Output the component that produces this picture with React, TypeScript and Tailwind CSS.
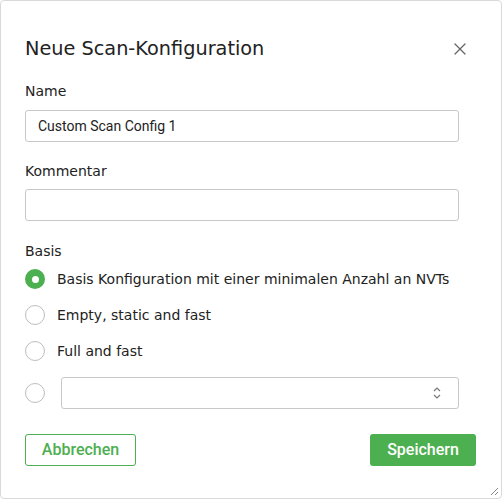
import { X } from 'lucide-react';

const dejavu = "font-['DejaVu_Sans',sans-serif]";
const roboto = "font-['Roboto',sans-serif]";

function Radio({ checked }: { checked?: boolean }) {
  return checked ? (
    <span className="flex h-5 w-5 shrink-0 items-center justify-center rounded-full bg-[#4caf50]">
      <span className="h-[7px] w-[7px] rounded-full bg-white" />
    </span>
  ) : (
    <span className="h-5 w-5 shrink-0 rounded-full border border-[#bdbdbd] bg-white" />
  );
}

export default function App() {
  const options = [
    { label: 'Basis Konfiguration mit einer minimalen Anzahl an NVTs', checked: true },
    { label: 'Empty, static and fast' },
    { label: 'Full and fast' },
  ];

  return (
    <div className="h-[499px] w-[502px] bg-white p-0">
      <div className="relative flex h-[499px] w-[502px] flex-col rounded border border-[#d9d9d9] bg-white px-6 pt-[34px] text-[#222]">
        {/* Header */}
        <div className="flex items-center justify-between">
          <h1 className={`${dejavu} text-[19.3px] leading-7 text-[#222]`}>Neue Scan-Konfiguration</h1>
          <button className="mr-[7px] text-[#666]" aria-label="Close">
            <X className="h-5 w-5" strokeWidth={1.5} />
          </button>
        </div>

        {/* Name */}
        <label className={`${dejavu} mt-[18px] text-[14px] leading-5`}>Name</label>
        <input
          className={`${roboto} mt-[9px] h-8 w-[434px] rounded-[3px] border border-[#c8c8c8] px-3 text-[14px] text-[#222] outline-none`}
          defaultValue="Custom Scan Config 1"
        />

        {/* Kommentar */}
        <label className={`${dejavu} mt-[19px] text-[14px] leading-5`}>Kommentar</label>
        <input
          className={`${roboto} mt-[8px] h-8 w-[434px] rounded-[3px] border border-[#c8c8c8] px-3 text-[14px] outline-none`}
        />

        {/* Basis */}
        <label className={`${dejavu} mt-[20px] text-[14px] leading-5`}>Basis</label>
        <div className="mt-[8px] flex flex-col gap-4">
          {options.map((o) => (
            <div key={o.label} className="flex h-5 items-center gap-3">
              <Radio checked={o.checked} />
              <span className={`${dejavu} text-[14px] leading-5 text-[#222]`}>{o.label}</span>
            </div>
          ))}
        </div>
        <div className="mt-4 flex items-center gap-4">
          <Radio />
          <div className="flex h-8 w-[398px] items-center justify-end rounded-[3px] border border-[#c8c8c8] pr-4">
            <svg width="10" height="14" viewBox="0 0 10 14" fill="none" stroke="#777" strokeWidth="1.2">
              <path d="M2 5l3-3 3 3" />
              <path d="M2 9l3 3 3-3" />
            </svg>
          </div>
        </div>

        {/* Footer */}
        <div className="mt-[25px] flex items-center justify-between pr-[1px]">
          <button
            className={`${roboto} h-8 w-[111px] rounded-[3px] border border-[#4caf50] text-[16px] font-medium text-[#4caf50]`}
          >
            Abbrechen
          </button>
          <button
            className={`${roboto} h-8 w-[106px] rounded-[3px] bg-[#4caf50] text-[16px] font-medium text-white`}
          >
            Speichern
          </button>
        </div>

        {/* resize handle */}
        <svg className="absolute bottom-[2px] right-[2px]" width="10" height="10" viewBox="0 0 10 10" stroke="#888" strokeWidth="1">
          <path d="M9 2L2 9M9 6L6 9" />
        </svg>
      </div>
    </div>
  );
}
